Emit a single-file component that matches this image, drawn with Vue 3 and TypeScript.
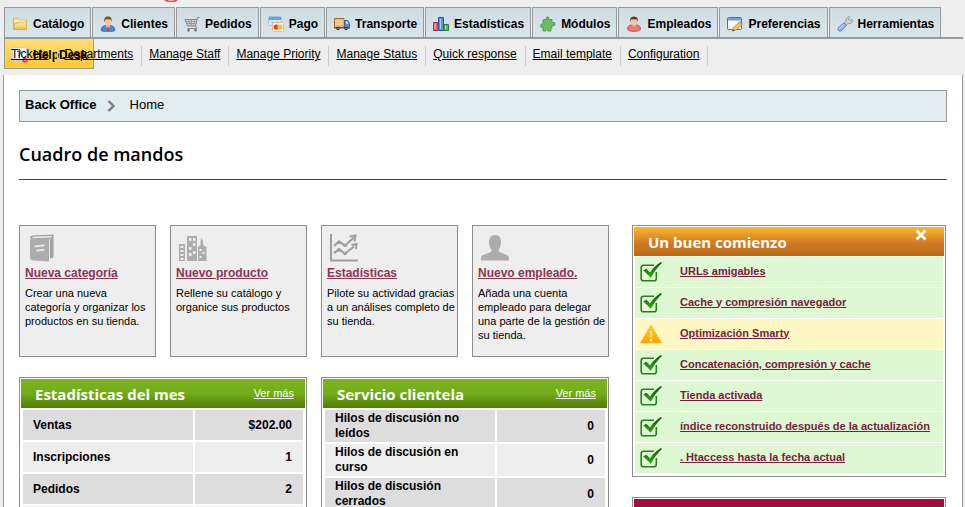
<script setup lang="ts">
interface Tab { label: string; icon: string }
interface Card { title: string; text: string; icon: string }
interface Row { label: string; value: string }
interface Panel { title: string; rows: Row[] }
interface Check { label: string; ok: boolean }

const tabs: Tab[] = [
  { label: 'Catálogo', icon: 'folder' },
  { label: 'Clientes', icon: 'customer' },
  { label: 'Pedidos', icon: 'cart' },
  { label: 'Pago', icon: 'cards' },
  { label: 'Transporte', icon: 'truck' },
  { label: 'Estadísticas', icon: 'bars' },
  { label: 'Módulos', icon: 'puzzle' },
  { label: 'Empleados', icon: 'employee' },
  { label: 'Preferencias', icon: 'edit' },
  { label: 'Herramientas', icon: 'wrench' },
]

const subLinks: string[] = [
  'Tickets', 'Departments', 'Manage Staff', 'Manage Priority',
  'Manage Status', 'Quick response', 'Email template', 'Configuration',
]

const cards: Card[] = [
  { title: 'Nueva categoría', text: 'Crear una nueva categoría y organizar los productos en su tienda.', icon: 'book' },
  { title: 'Nuevo producto', text: 'Rellene su catálogo y organice sus productos', icon: 'city' },
  { title: 'Estadísticas', text: 'Pilote su actividad gracias a un análises completo de su tienda.', icon: 'chart' },
  { title: 'Nuevo empleado.', text: 'Añada una cuenta empleado para delegar una parte de la gestión de su tienda.', icon: 'person' },
]

const panels: Panel[] = [
  {
    title: 'Estadísticas del mes',
    rows: [
      { label: 'Ventas', value: '$202.00' },
      { label: 'Inscripciones', value: '1' },
      { label: 'Pedidos', value: '2' },
    ],
  },
  {
    title: 'Servicio clientela',
    rows: [
      { label: 'Hilos de discusión no leídos', value: '0' },
      { label: 'Hilos de discusión en curso', value: '0' },
      { label: 'Hilos de discusión cerrados', value: '0' },
    ],
  },
]

const checks: Check[] = [
  { label: 'URLs amigables', ok: true },
  { label: 'Cache y compresión navegador', ok: true },
  { label: 'Optimización Smarty', ok: false },
  { label: 'Concatenación, compresión y cache', ok: true },
  { label: 'Tienda activada', ok: true },
  { label: 'índice reconstruido después de la actualización', ok: true },
  { label: '. Htaccess hasta la fecha actual', ok: true },
]
</script>

<template>
  <div class="page">
    <svg class="defs" width="0" height="0" aria-hidden="true">
      <defs>
        <linearGradient id="g-check" x1="0" y1="0" x2="0" y2="1">
          <stop offset="0" stop-color="#0d4f0d" /><stop offset="1" stop-color="#2faa12" />
        </linearGradient>
        <linearGradient id="g-folder" x1="0" y1="0" x2="0" y2="1">
          <stop offset="0" stop-color="#fdf3b8" /><stop offset="1" stop-color="#f0bd45" />
        </linearGradient>
        <linearGradient id="g-warn" x1="0" y1="0" x2="0" y2="1">
          <stop offset="0" stop-color="#ffd21f" /><stop offset="1" stop-color="#ffa200" />
        </linearGradient>
      </defs>
    </svg>

    <header class="top">
      <svg width="14" height="2" viewBox="0 0 14 2" aria-hidden="true">
        <path d="M0 0H14Q12 2 10 2H4Q2 2 0 0Z" fill="#e2505c" /><path d="M4 0h6v1H4z" fill="#f5a0a5" />
      </svg>
    </header>

    <nav class="tabs">
      <a v-for="tab in tabs" :key="tab.label" href="#" class="tab">
        <svg width="16" height="16" viewBox="0 0 16 16" aria-hidden="true">
          <g v-if="tab.icon === 'folder'" stroke="#dcae48" stroke-width=".9">
            <path d="M1.500 13.500v-11h5l1 1.500h7v9.500z" fill="#fbe9a0" />
            <path d="M1.500 13.500l1.500-6.500h4l1-1h6.500v7.500z" fill="url(#g-folder)" />
            <path d="M3.500 5h10" stroke="#fffbe0" />
          </g>
          <g v-else-if="tab.icon === 'customer'">
            <path d="M1.500 15q-1-2 .5-4 2-2 6-2t6 2q1.500 2 .5 4l-2 .5h-9z" fill="#4f86cf" stroke="#2d5ba0" stroke-width=".6" />
            <path d="M6 9.500l2 5 2-5z" fill="#fff" /><path d="M7.500 10h1l.5 4-1 1.500-1-1.500z" fill="#c23a2c" />
            <ellipse cx="8" cy="5.600" rx="3.400" ry="4.400" fill="#f3c79f" />
            <path d="M4.300 6q-.8-5.500 3.700-5.800Q12.500.5 11.700 6l-.8-2.500-5-.2z" fill="#84502a" />
          </g>
          <g v-else-if="tab.icon === 'cart'" fill="none" stroke="#858585">
            <path d="M15.500 1.500h-2l-2 8.500h-8l-2.500-6.500h12" fill="#d9d9d9" />
            <path d="M2 5.500h10.500M3 7.500h9M4.500 3.500l1.500 6M7.500 3.500v6M10.500 3.500l-1 6" stroke="#8f8f8f" stroke-width=".8" />
            <path d="M11.500 10l1 2.500h-9" />
            <circle cx="4.500" cy="14.300" r="1" fill="#555" /><circle cx="11.500" cy="14.300" r="1" fill="#555" />
          </g>
          <g v-else-if="tab.icon === 'cards'">
            <rect x=".5" y=".5" width="13" height="9" rx="1" fill="#d7e8fa" stroke="#a4c2e2" />
            <path d="M1 1h12v3H1z" fill="#66a3e0" /><path d="M4 6l1 2 1-2M7.500 6v2M10 6h-1v1h1v1H9" fill="none" stroke="#3469aa" stroke-width=".8" />
            <rect x="4.500" y="6.500" width="11" height="9" rx="1" fill="#fff4dc" stroke="#d8c39b" />
            <circle cx="8.200" cy="11" r="2.600" fill="#e33a24" /><circle cx="12" cy="11" r="2.600" fill="#f4c23b" />
          </g>
          <g v-else-if="tab.icon === 'truck'">
            <path d="M.5 2.500h9.500v9H.5z" fill="#e9b778" stroke="#aa6b2c" /><path d="M1 5h9M1 8h9" stroke="#f9dfb5" />
            <path d="M10.500 4.500h3l2 3v4h-5z" fill="#5b8fd6" stroke="#375f9e" /><path d="M12 5.500h1.300l1 2.300H12z" fill="#e3f1ff" />
            <path d="M0 11h16v1.500H0z" fill="#555" />
            <circle cx="4" cy="12.500" r="1.700" fill="#333" /><circle cx="12" cy="12.500" r="1.700" fill="#333" />
            <circle cx="4" cy="12.500" r=".6" fill="#ddd" /><circle cx="12" cy="12.500" r=".6" fill="#ddd" />
          </g>
          <g v-else-if="tab.icon === 'bars'">
            <path d="M.5 6.500h4.500v8H.5z" fill="#f0606b" stroke="#c3242e" /><path d="M2 8v5" stroke="#ffb5b8" />
            <path d="M5.500 1.500h5v13h-5z" fill="#5d93e4" stroke="#2457b0" /><path d="M7.500 3v10" stroke="#b4d3fc" />
            <path d="M11 8.500h4.500v6H11z" fill="#69b25d" stroke="#2d7a2a" /><path d="M12.500 10v3.500" stroke="#bce8ad" />
          </g>
          <path v-else-if="tab.icon === 'puzzle'" d="M4 3.500h2.500Q5.500 1 7.500.8 9.700 1 8.700 3.500H12v3.200q3-1.200 3.300 1.300-.3 2.600-3.300 1.400V12h-1v3H7.700q.8-2.500-.8-2.500-1.600 0-.8 2.500H3v-3.700Q.6 12.300.5 9.700.6 7.300 3 8V4z" fill="#6bbd65" stroke="#439540" stroke-width=".8" />
          <g v-else-if="tab.icon === 'employee'">
            <path d="M1.500 13.500Q1 10.300 4 9.200q4-1.200 8 0 3 1.100 2.500 4.300-2 2-6.500 2t-6.500-2z" fill="#f27770" stroke="#c8413c" stroke-width=".8" />
            <path d="M6 8.500h4q-.5 2.500-2 2.500T6 8.500z" fill="#e8ad82" />
            <ellipse cx="8" cy="5.500" rx="3.300" ry="4" fill="#f3c79f" />
            <path d="M4.200 5.800Q3.300.6 8 .4q4.700.2 3.800 5.400L10.900 3.600l-5.500-.3z" fill="#65391d" />
          </g>
          <g v-else-if="tab.icon === 'edit'">
            <rect x=".5" y="1.500" width="14" height="12" rx="1" fill="#f6faff" stroke="#3f74bd" />
            <path d="M1 2h13v2.500H1z" fill="#6f9fe0" />
            <path d="M5.500 15l1-3.500 6-5.500 2.500 2.500-6 5.500z" fill="#f7c95c" stroke="#bd7c22" stroke-width=".8" /><path d="M12.500 6l1-.8 2 2.300-.8.9z" fill="#dd6f52" /><path d="M5.500 15l.5-1.800 1.500 1.300z" fill="#443" />
          </g>
          <g v-else>
            <path d="M9 5Q8.600 2 11.500.7l1.500.2-1.700 2 1.500 1.600 2.400-1.300q.9 3.500-2.300 4.500L11 7.500 9.300 9 7.200 7z" fill="#d0d0d0" stroke="#858585" stroke-width=".7" />
            <path d="M7 6.800l2.500 2.500-5 5.500q-1.500 1-3-.2-1.200-1.500-.2-3z" fill="#8fb3ef" stroke="#5079c5" stroke-width=".8" />
            <path d="M2.500 12.500L7 8.300" stroke="#d4e4ff" />
          </g>
        </svg>
        <span>{{ tab.label }}</span>
      </a>
    </nav>

    <div class="subbar">
      <a href="#" class="tab tab-active">
        <svg width="16" height="16" viewBox="0 0 16 16" aria-hidden="true">
          <path d="M.5 .5h14v13H.5z" fill="#f4f6fb" stroke="#c9cedb" />
          <path d="M5 5q3-2.500 4 0 0 1.500-2 3v1" fill="none" stroke="#5d86c3" stroke-width="1.500" />
          <circle cx="13" cy="13" r="2.600" fill="#e23350" /><circle cx="13" cy="13" r=".8" fill="#fff" />
        </svg>
        <span>HelpDesk</span>
      </a>
      <ul class="sublinks">
        <li v-for="link in subLinks" :key="link"><a href="#">{{ link }}</a></li>
      </ul>
    </div>

    <main class="content">
      <div class="crumbs">
        <a href="#" class="crumb-root">Back Office</a>
        <svg width="9" height="12" viewBox="0 0 9 12" aria-hidden="true"><path d="M1.500 1l5 5-5 5" fill="none" stroke="#7d7d7d" stroke-width="2.400" /></svg>
        <span>Home</span>
      </div>
      <h1>Cuadro de mandos</h1>

      <div class="columns">
        <div class="left">
          <section class="cards">
            <article v-for="card in cards" :key="card.title" class="card">
              <svg width="32" height="28" viewBox="0 0 32 28" aria-hidden="true">
                <g v-if="card.icon === 'book'">
                  <path d="M5 4q0-2.500 3-2.500L28.500.5v23L25 24.500V5L7 5.500z" fill="#a3a3a3" />
                  <path d="M7.500 2.800L26.500 2v1.600l-19 .7z" fill="#eee" />
                  <path d="M5 5.200l19-.8v23L8 26.500q-3-.5-3-3z" fill="#acacac" />
                  <path d="M9.500 11.500l10-1v1.800l-10 1zM11.500 15.700l8-.8v1.800l-8 .8z" fill="#eee" />
                </g>
                <g v-else-if="card.icon === 'city'">
                  <path d="M3 10h6v17H3zM11 2h10v25H11zM22 13l2.500-2V7l1-3 1.500 3v4l3.500 2v14H22z" fill="#adadad" />
                  <path d="M4.500 12h3v2h-3zM4.500 16h3v2h-3zM4.500 20h3v2h-3zM4.500 24h3v2h-3zM13 4h2.500v3H13zM17 4h2.500v3H17zM13 13h2.500v3H13zM17 9h2.500v3H17zM13 19h2.500v3H13zM17 17h2.500v3H17zM23.500 15h2v2h-2zM26.500 18h2v2h-2zM23.500 22h2v2h-2z" fill="#eee" />
                </g>
                <g v-else-if="card.icon === 'chart'" fill="none" stroke="#a0a0a0">
                  <path d="M4 0v26.500h27" stroke-width="2" />
                  <path d="M7 12l5-4.500 6 4L27 3.500" stroke-width="2.200" /><path d="M7 19l5-3.500 6 4 9-7" stroke-width="2.200" />
                  <path d="M22.500 2.500l6-1-1 6M24.500 11l5-1-.5 5" stroke-width="2" />
                  <path d="M10 7h4v3h-4zM16.500 10h3v3h-3zM10 14.500h4v3h-4zM16.500 18.500h3v2.500h-3z" fill="#a0a0a0" stroke="none" />
                </g>
                <path v-else d="M3 26.500v-3q.5-2.500 6-4 4.500-1.200 4.500-3.500Q11.500 13.500 11 9.500 10.500 1 17 1t6 8.500q-.5 4-2.500 6.500 0 2.300 4.500 3.500 5.500 1.500 6 4v3z" fill="#adadad" />
              </svg>
              <a href="#" class="card-title">{{ card.title }}</a>
              <p>{{ card.text }}</p>
            </article>
          </section>

          <div class="panels">
            <section v-for="panel in panels" :key="panel.title" class="panel">
              <header class="panel-head green">
                <h2>{{ panel.title }}</h2>
                <a href="#">Ver más</a>
              </header>
              <table>
                <tbody>
                  <tr v-for="row in panel.rows" :key="row.label">
                    <th scope="row">{{ row.label }}</th>
                    <td>{{ row.value }}</td>
                  </tr>
                  <tr><th scope="row"></th><td></td></tr>
                </tbody>
              </table>
            </section>
          </div>
        </div>

        <aside class="right">
          <section class="panel start">
            <header class="panel-head orange">
              <h2>Un buen comienzo</h2>
              <button type="button" aria-label="Cerrar">
                <svg width="12" height="12" viewBox="0 0 12 12" aria-hidden="true"><path d="M1.500 1.500l9 9M10.500 1.500l-9 9" stroke="#fff" stroke-width="2.800" /></svg>
              </button>
            </header>
            <ul class="checks">
              <li v-for="check in checks" :key="check.label" :class="{ warn: !check.ok }">
                <svg v-if="check.ok" width="22" height="20" viewBox="0 0 22 20" aria-hidden="true">
                  <path d="M14 3.200H3.500Q1.200 3.200 1.200 5.500v11q0 2.300 2.300 2.300h10.500q2.300 0 2.300-2.300V10" fill="none" stroke="#2b7d22" stroke-width="1.600" />
                  <path d="M3.200 8.300l3.300-1.500L10 10.500Q14 4.200 21 0l.9.900Q15.800 6.500 10.800 15.800z" fill="url(#g-check)" />
                </svg>
                <svg v-else width="22" height="20" viewBox="0 0 22 20" aria-hidden="true">
                  <path d="M11 1L21.500 19H.5z" fill="url(#g-warn)" stroke="#f5b21d" stroke-width=".6" />
                  <path d="M10 7h2.200l-.5 6.500h-1.200zM10 15h2.200v2.200H10z" fill="#fff6c8" />
                </svg>
                <a href="#">{{ check.label }}</a>
              </li>
            </ul>
          </section>
          <section class="panel"><header class="panel-head crimson"></header></section>
        </aside>
      </div>
    </main>
  </div>
</template>

<style>
body {
  background: #eee;
  overflow: hidden;
}
</style>

<style scoped>
* { box-sizing: border-box; }
.page {
  font: 12px/15px "Liberation Sans", Arial, sans-serif;
  color: #000;
  height: 100vh;
  overflow: hidden;
}
.defs { position: absolute; }
svg { display: block; flex: none; }
a { color: inherit; }
ul { list-style: none; margin: 0; padding: 0; }
.top { height: 7px; padding-left: 164px; }
.tabs {
  display: flex;
  gap: 1px;
  margin: 0 2px 0 4px;
  border-bottom: 2px solid #999;
}
.tab {
  display: flex;
  align-items: center;
  gap: 5px;
  height: 30px;
  padding: 3px 6px 0 7px;
  border: 1px solid #999;
  border-bottom: 0;
  background: linear-gradient(#cfdde2, #d8e5ea);
  font-weight: bold;
  text-decoration: none;
  white-space: nowrap;
}
.subbar { display: grid; align-items: start; height: 36px; padding-left: 4px; }
.subbar > * { grid-area: 1 / 1; }
.tab-active {
  justify-self: start;
  padding-right: 5px;
  border: 1px solid #999;
  border-top: 0;
  background: linear-gradient(#ffdd77, #ffc92e);
}
.sublinks { display: flex; padding-top: 7px; z-index: 1; }
.sublinks li {
  height: 20px;
  padding: 0 8px 0 7px;
  border-right: 1px solid #ccc;
  line-height: 17px;
  white-space: nowrap;
}
.content {
  min-height: 500px;
  margin: 0 2px 0 3px;
  padding: 15px;
  border: solid #999;
  border-width: 0 1px;
  background: #fff;
}
.crumbs {
  display: flex;
  align-items: center;
  height: 32px;
  padding: 0 5px 3px;
  border: 1px solid #999;
  background: #e2ebee;
  font-size: 13px;
}
.crumbs svg { margin: 2px 14px 0 10px; }
.crumb-root { font-weight: bold; text-decoration: none; }
h1 {
  margin: 0 0 45px;
  padding: 20px 0 13px;
  border-bottom: 1px solid #812143;
  font: 600 18px/24px "Trebuchet MS", "Open Sans", sans-serif;
}
.columns {
  display: grid;
  grid-template-columns: minmax(0, 1fr) 314px;
  gap: 23px;
  padding-right: 1px;
}
.cards { display: grid; grid-template-columns: repeat(4, 1fr); gap: 14px; }
.card {
  height: 132px;
  padding: 8px 2px 8px 5px;
  border: 1px solid #8d8d8d;
  background: #eee;
  font-size: 11px;
  line-height: 14px;
}
.card-title {
  display: block;
  width: fit-content;
  margin-top: 4px;
  color: #8f3556;
  font-size: 12px;
  font-weight: bold;
  white-space: nowrap;
}
.card p { margin: 6px 0 0; }
.panels { display: grid; grid-template-columns: repeat(2, 1fr); gap: 14px; margin-top: 20px; }
.panel { padding: 1px; border: 1px solid #8d8d8d; background: #fff; }
.panel-head {
  display: flex;
  align-items: center;
  justify-content: space-between;
  height: 29px;
  padding: 0 11px 0 14px;
  color: #fff;
}
.panel-head h2 { margin: 0; font: bold 15px/24px "Trebuchet MS", "Open Sans", sans-serif; }
.panel-head a { font-size: 11px; }
.green { background: linear-gradient(#7ab51d, #73ac1a 50%, #4c7f00); }
.orange { background: linear-gradient(#fdb72b, #d27a25 55%, #bb6a14); }
.crimson { background: #a10f3f; }
table { width: 100%; border-collapse: separate; border-spacing: 2px; table-layout: fixed; }
th, td { height: 30px; padding: 1px 10px; background: #ddd; font-weight: bold; }
th { width: 61%; text-align: left; }
td { padding-right: 11px; text-align: right; }
tr:nth-child(even) > * { background: #eee; }
.right { display: grid; align-content: start; gap: 20px; }
.panel-head button {
  align-self: start;
  margin: 2px 6px 0 0;
  padding: 0;
  border: 0;
  background: none;
}
.checks { display: grid; gap: 1px; padding: 1px 1px 2px; }
.checks li {
  display: flex;
  align-items: center;
  gap: 18px;
  height: 30px;
  padding-left: 5px;
  background: #def8d3;
  color: #7a1c3c;
  font-size: 11px;
  font-weight: bold;
  white-space: nowrap;
}
.checks a { padding-bottom: 2px; }
.checks .warn { background: #fff8c4; }
</style>
